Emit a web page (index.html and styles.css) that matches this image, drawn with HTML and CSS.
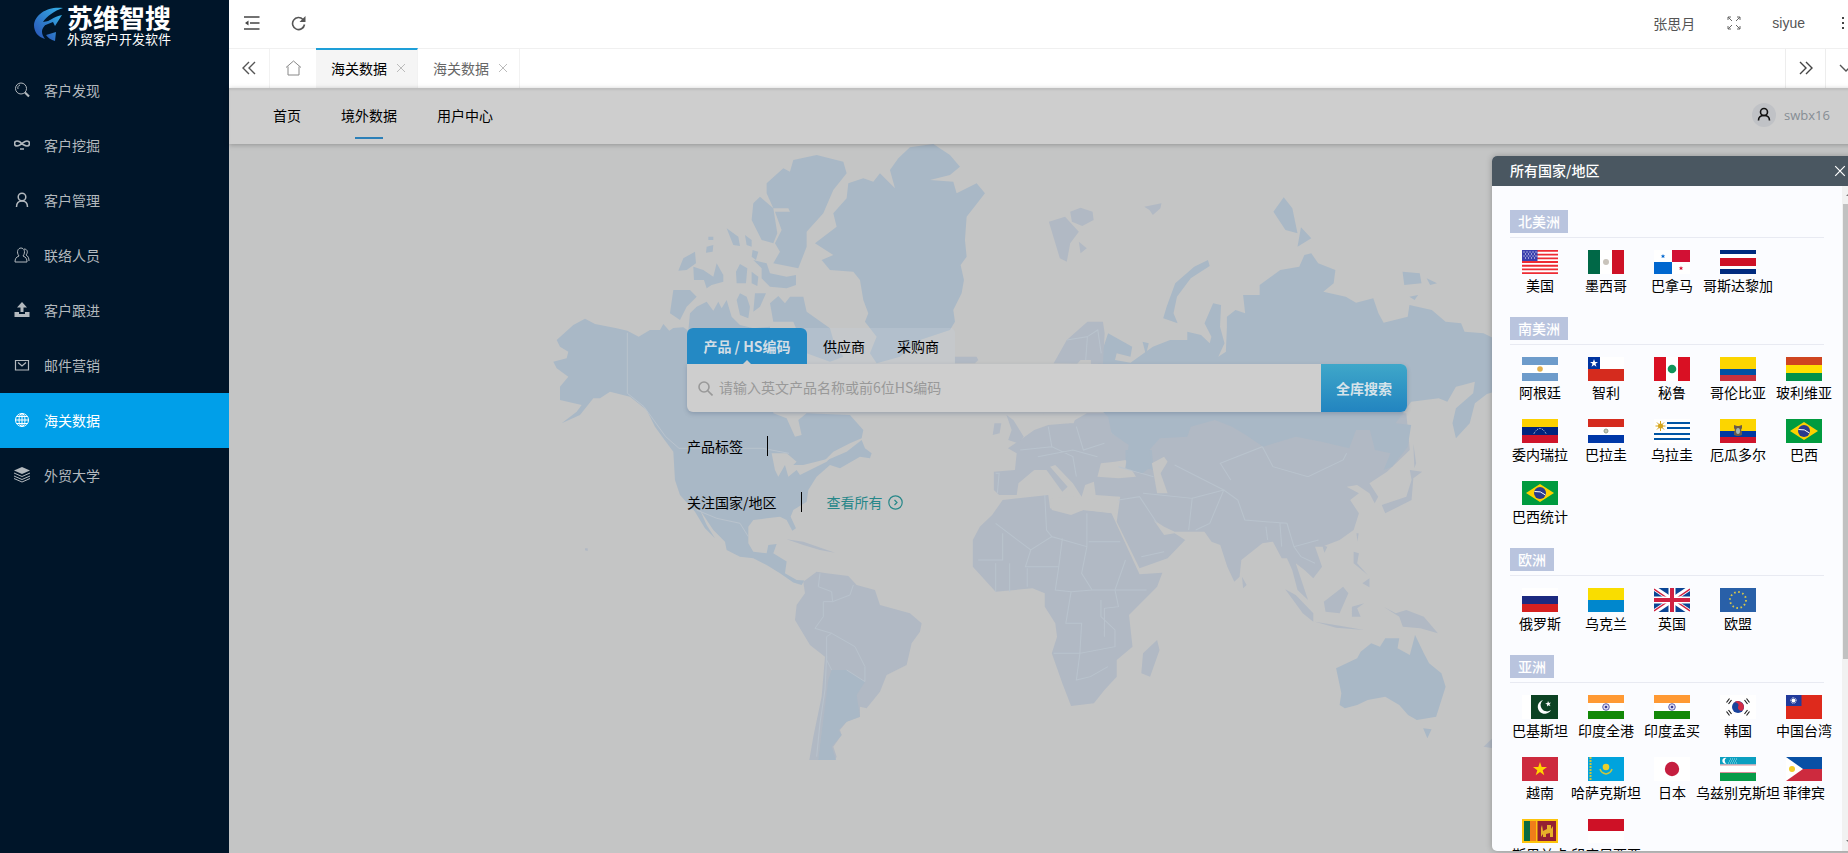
FILE: index.html
```html
<!DOCTYPE html>
<html lang="zh-CN">
<head>
<meta charset="utf-8">
<title>海关数据</title>
<link rel="stylesheet" href="styles.css">
</head>
<body>
<svg class="defs" aria-hidden="true">
  <symbol id="brazil" viewBox="0 0 36 24"><path fill="#009b3f" d="M0 0h36v24H0z"/><path fill="#fed100" d="M18 3 32 12 18 21 4 12z"/><circle cx="18" cy="12" r="6" fill="#2b3a8c"/><path d="M12.500 10.500q6-1 11 3.500" stroke="#fff" fill="none"/></symbol>
  <symbol id="india" viewBox="0 0 36 24"><path fill="#fff" d="M0 0h36v24H0z"/><path fill="#ff9933" d="M0 0h36v8H0z"/><path fill="#138808" d="M0 16h36v8H0z"/><circle cx="18" cy="12" r="3.300" fill="#dfe0f4" stroke="#3a3a95" stroke-width=".8"/><circle cx="18" cy="12" r="1.300" fill="#3a3a95"/></symbol>
  <symbol id="close" viewBox="0 0 10 10"><path d="M1 1l8 8M9 1 1 9" fill="none" stroke="currentColor"/></symbol>
</svg>
<div class="app">
  <aside class="sidebar">
    <a class="logo" href="#">
      <svg width="30" height="36" viewBox="0 0 30 36"><defs><linearGradient id="lg" x1="1" y1="0" x2="0" y2="1"><stop offset="0" stop-color="#35b1e6"/><stop offset="1" stop-color="#2951b5"/></linearGradient></defs><path fill="url(#lg)" d="M29 1C14-1 1 7 0 18c0 7 4 12 11 14-3-4-4-8-2-11 2-4 6-6 11-8L9 15C13 9 20 4 29 1z"/><path fill="url(#lg)" d="M28 8 21 19l-2-4-10 4c4-5 11-9 19-11zM12 28l10-3-1 9c-4-1-7-3-9-6z"/></svg>
      <span class="logo-text"><strong>苏维智搜</strong><small>外贸客户开发软件</small></span>
    </a>
    <nav class="menu">
      <a href="#"><svg viewBox="0 0 16 16"><circle cx="7" cy="6.500" r="5.500"/><path d="M4 7a3 3 0 0 1 2-4"/><path stroke-width="2.200" d="m11 10.500 4 4"/></svg>客户发现</a>
      <a href="#"><svg viewBox="0 0 16 16"><path stroke-width="1.700" d="M8 7C6 4 4 4 3 4a2.500 2.500 0 0 0 0 5c2 0 3-1 5-2.500S11 4 13 4a2.500 2.500 0 0 1 0 5c-2 0-3-1-5-2M6 12h4"/></svg>客户挖掘</a>
      <a href="#"><svg viewBox="0 0 16 16"><circle cx="8" cy="5" r="3.800" stroke-width="1.500"/><path stroke-width="1.500" d="M2.500 15c0-4 2-6 5.500-6s5.500 2 5.500 6"/></svg>客户管理</a>
      <a href="#"><svg viewBox="0 0 16 16"><path d="M5 9C2 5 4 1 7 1s5 4 2 8c3 1 4 3 4 6H1c0-3 1-5 4-6zM10 2c4 0 4 4 2 6 2 1 3 3 3 6"/></svg>联络人员</a>
      <a href="#"><svg viewBox="0 0 16 16"><path class="solid" d="M8 0l5 5.500h-3.500V10h-3V5.500H3zM.500 10H5v2h6v-2h4.500v5H.500z"/></svg>客户跟进</a>
      <a href="#"><svg viewBox="0 0 16 16"><path d="M1.500 3.500h13v9.500h-13zM4 5.500 8 9l4-3.500" stroke-width="1.200"/></svg>邮件营销</a>
      <a href="#" class="active"><svg viewBox="0 0 16 16"><circle cx="8" cy="8" r="6.500"/><ellipse cx="8" cy="8" rx="3" ry="6.500"/><path d="M8 1v14M1.500 8h13M2.500 4.500h11M2.500 11.500h11"/></svg>海关数据</a>
      <a href="#"><svg viewBox="0 0 16 16"><path class="solid" d="m8 0 8 3.500L8 7 0 3.500z"/><path d="m0 6 8 3.500L16 6M0 9l8 3.500L16 9M0 11.500 8 15l8-3.500"/></svg>外贸大学</a>
    </nav>
  </aside>

  <div class="main">
    <header class="topbar">
      <button class="icon-btn" aria-label="折叠菜单"><svg width="16" height="14" viewBox="0 0 16 14"><path d="M0 1h15.500M6 7h9.500M0 13h15.500" stroke="#444" stroke-width="1.600"/><path fill="#444" d="m1 7 3.500-2.500v5z"/></svg></button>
      <button class="icon-btn" aria-label="刷新"><svg width="15" height="15" viewBox="0 0 15 15"><path d="M12 3.500A6 6 0 1 0 13.500 8.500" fill="none" stroke="#555" stroke-width="1.600"/><path fill="#555" d="M14.500 0v6h-6z"/></svg></button>
      <span class="spacer"></span>
      <a href="#">张思月</a>
      <button class="icon-btn full" aria-label="全屏"><svg width="14" height="14" viewBox="0 0 14 14"><path d="M1 4V1h3M1 1l4 4M10 1h3v3M13 1 9 5M1 10v3h3M1 13l4-4M10 13h3v-3M13 13 9 9" fill="none" stroke="#666"/></svg></button>
      <a href="#" class="account">siyue</a>
      <button class="icon-btn more" aria-label="更多"><svg width="4" height="14" viewBox="0 0 4 14"><path d="M1 1h2v2H1zM1 6h2v2H1zM1 11h2v2H1z" fill="#444"/></svg></button>
    </header>
    <div class="tabs">
      <button class="tab-ctl" aria-label="向左"><svg width="14" height="14" viewBox="0 0 14 14"><path d="M7 1 1 7l6 6M13 1 7 7l6 6" fill="none" stroke="#555" stroke-width="1.400"/></svg></button>
      <button class="tab-ctl home" aria-label="主页"><svg width="17" height="16" viewBox="0 0 17 16"><path d="M1 7.500 8.500 1 16 7.500M3 6.500V15h11V6.500" fill="none" stroke="#888"/></svg></button>
      <a class="tab on" href="#">海关数据<svg width="10" height="10"><use href="#close"/></svg></a>
      <a class="tab" href="#">海关数据<svg width="10" height="10"><use href="#close"/></svg></a>
      <span class="spacer"></span>
      <button class="tab-ctl end" aria-label="向右"><svg width="14" height="14" viewBox="0 0 14 14"><path d="m1 1 6 6-6 6M7 1l6 6-6 6" fill="none" stroke="#444" stroke-width="1.400"/></svg></button>
      <button class="tab-ctl end" aria-label="展开"><svg width="14" height="8" viewBox="0 0 14 8"><path d="m1 1 6 6 6-6" fill="none" stroke="#555" stroke-width="1.400"/></svg></button>
    </div>
    <nav class="subnav">
      <a href="#">首页</a><a href="#" class="current">境外数据</a><a href="#">用户中心</a>
      <span class="spacer"></span>
      <a href="#" class="user"><svg width="24" height="24" viewBox="0 0 24 24"><circle cx="12" cy="12" r="12" fill="#c0c2c6"/><circle cx="12" cy="9" r="3.500"/><path d="M6.500 17.500c0-3.500 2-5 5.500-5s5.500 1.500 5.500 5"/></svg>swbx16</a>
    </nav>

    <main class="stage">
      <svg class="map" viewBox="229 144 1636 709" preserveAspectRatio="xMidYMin meet" aria-hidden="true">
        <g transform="translate(540 140) scale(.3333)">
          <path class="b" d="M135 536 165 552 230 565 262 572 296 590 330 570 360 570 370 552 388 572 400 564 430 562 445 572 450 520 470 500 500 485 520 512 535 485 545 505 560 480 575 530 600 555 640 565 690 560 700 700 700 820 740 835 765 890 785 885 775 840 800 820 930 825 970 870 965 895 930 910 880 935 850 965 920 935 965 900 975 925 995 940 990 955 960 950 900 985 870 975 830 1010 805 1050 800 1085 760 1110 752 1130 768 1165 757 1172 740 1140 720 1130 680 1135 640 1140 625 1160 625 1210 640 1235 680 1240 685 1215 710 1212 700 1240 740 1265 735 1300 770 1320 793 1322 785 1335 760 1328 720 1300 680 1275 640 1255 600 1250 560 1230 555 1205 520 1170 480 1110 500 1155 525 1195 495 1165 465 1115 420 1065 405 1020 400 935 370 895 345 860 320 810 270 770 210 755 180 775 160 775 120 825 65 850 110 815 125 795 60 780 60 740 85 710 50 685 40 665 80 655 85 635 60 620 50 600 100 555z"/>
          <path class="b" d="M1110 22 1180 12 1230 45 1260 80 1230 105 1170 120 1240 125 1250 160 1310 130 1335 160 1300 205 1280 230 1275 300 1280 350 1262 375 1272 420 1265 460 1240 510 1245 545 1230 570 1140 600 1080 650 1010 670 990 640 1010 590 975 545 985 520 970 480 960 420 940 395 870 390 845 360 880 345 825 310 890 260 880 220 920 175 925 130 970 115 1000 125 1020 100 1065 145 1050 90 1075 55zM750 95 760 60 830 45 910 65 920 100 880 150 850 220 800 275 800 320 775 385 700 370 720 335 705 310 725 270 705 215 750 215 745 205 700 205 680 160 680 130 730 85zM660 170 700 205 712 280 700 310 665 300 635 240 640 190zM560 265 595 290 600 318 580 315zM505 290h15v10h-15zM500 320 520 315 518 335 498 338zM615 285 635 300 635 320 620 315zM638 330 655 335 648 360 635 350zM465 335 468 370 440 390 415 392 430 355zM460 380 490 390 520 410 530 370 550 405 550 425 515 435 500 445 492 420 462 420zM600 372 622 385 618 430 590 430 588 395zM635 395 655 410 652 438 635 430zM640 360 680 370 690 400 740 410 768 405 768 435 740 445 690 440 665 415 665 385zM400 450 450 450 470 470 440 500 420 540 390 520zM600 460 620 470 630 500 625 535 600 525 590 480zM645 460 678 460 660 500 640 515zM690 490 715 468 735 490 750 470 790 470 800 515 870 565 880 600 910 650 870 665 800 640 760 545 700 545z"/>
          <path class="p" d="M1245 650h65l5 10-10 10h-60z"/>
          <path class="hole" d="M695 940 740 940 770 965 760 975 790 975 870 955 860 965 780 1005 770 990 745 1010 735 975 715 1010 705 990z"/>
          <path class="ln" d="M262 578V760l50 40 65 90 40 35h250l80 15M470 1110l60 25 70 15 25 40"/>
        </g>
        <g transform="translate(540 490) scale(.3333)">
          <path class="p" d="M790 275 830 245 860 250 925 258 950 285 1005 300 1020 345 1110 370 1145 400 1140 425 1115 460 1100 525 1040 555 1020 605 980 655 960 650 960 680 920 695 900 720 905 735 880 770 890 800 885 810 808 810 820 740 845 620 855 500 810 465 765 390 770 345 795 310zM740 148 790 155 885 188 840 180 790 165zM135 175l8 0 0 8-8-2z"/>
          <path class="b" d="M875 540 920 540 975 575 950 615 960 680 920 695 895 720 905 735 875 770 888 810H835L850 690 865 570z"/>
          <path class="ln" d="M840 250 835 290 875 305 878 335 850 335 850 380 825 415 875 430 860 440 860 510 875 540M878 335 930 315 940 285M875 430 945 470 975 530 975 575 920 540M860 500 855 600 840 700 830 800"/>
        </g>
        <g transform="translate(950 450) scale(.351 .3333)">
          <path class="p" d="M125 65 185 60 190 10 165-5 200-30 240-60 280-75 340-80 390-110 470-110 460-50 510-20 700-110 1300-110 1310 0 1290 20 1245 65 1195 100 1220 140 1210 160 1195 130 1160 105 1130 110 1165 130 1140 150 1165 190 1150 240 1110 270 1060 290 1040 290 1060 350 1035 385 1010 360 985 340 1020 450 990 420 975 360 960 325 945 325 920 275 890 280 830 330 825 380 810 395 790 350 770 285 745 275 725 245 640 245 610 230 580 210 610 255 640 250 670 270 620 325 540 355 475 215 485 140 415 135 410 95 385 105 375 140 350 100 300 45 285 50 335 110 320 125 275 60 240 60 195 100 190 135 140 135 125 120z"/>
          <path class="p" d="M150 150 280 135 285 175 340 190 380 180 460 190 540 373 605 368 590 410 510 495 520 590 475 630 475 680 440 720 410 760 345 768 320 700 290 610 305 560 300 520 270 470 270 430 235 415 130 425 65 350 65 270 85 230 120 195zM590 570 597 600 570 680 545 670 550 610zM832 380 845 405 835 415zM955 418 985 435 1035 490 1035 515 1005 490zM1065 455 1120 410 1135 430 1110 490 1070 485zM1040 515 1110 527 1180 540 1100 533zM1150 305 1165 310 1160 340 1190 375 1150 340zM1175 400 1195 385 1195 412zM1145 470 1180 460 1160 475 1170 500 1145 500zM1235 470 1270 490 1300 480 1350 500 1390 550 1340 535 1290 530 1280 500zM1230 165 1300 140 1315 90 1310 60 1345 65 1320 85 1315 150 1240 190zM1320-20l8 60-5 15zM1158 250l6 0-3 25zM1520 890l60-60v70zM1060 285l15 5-8 18z"/>
          <path class="b" d="M1100 655 1160 625 1170 605 1200 580 1225 590 1240 565 1280 565 1275 595 1310 615 1325 555 1350 610 1365 640 1400 670 1412 710 1385 800 1330 810 1305 795 1280 765 1240 740 1190 750 1160 765 1125 775 1110 765 1115 730zM1348 835 1372 838 1360 865zM500 0h75l5 60-80-20z"/>
          <path class="hole" d="M420 80 430 40 470 35 500 30 530 80 480 85zM575 40 610 20 620 35 600 70 620 130 590 130zM350 140 400 150 480 140 475 190 380 180 345 195 290 180 285 145z"/>
          <path class="ln" d="M150 250V330H80M130 220 230 300 290 260 390 290V190M230 300 215 350H310L320 265M395 275H485M390 290 375 370 405 420 470 420 500 330M270 135 275 240 290 260M310 350 300 420 345 425 405 420M220 355V410M130 340V425M170 340V425M345 425 330 520H375L370 610H295M430 450V500L470 540V590L370 610 360 690 400 680 450 650M470 420 480 470 440 475V560M470 420 560 420M545 320 610 305M480 150 540 140 590 220M550 130 690 145 680 240M690 145 780 120 740 220 700 240M780 120 820 150 840 210 960 220 980 290 1050 270M640 45 780 120M800 90 770 40 890-10 920 50 1020 80 1120 30 1130 10M900 230 905 270M940 220 945 290M980 290 1000 320 1040 340M250 20 350 0 420 20M280-70 290-10 350 20 360 80M360-70 380 0 440-20M200 0 290-10M480 50 580 80M130 70 140 70 135 130"/>
        </g>
        <g transform="translate(960 140) scale(.3444 .3333)">
          <path class="b" d="M400 672 430 580 500 620 495 650 455 640 450 660 495 668 560 620 610 600 660 600 660 575 700 585 725 610 730 590 710 550 735 490 758 495 755 560 768 610 750 650 772 635 775 560 775 530 800 510 828 520 822 465 870 465 870 435 930 390 985 380 1000 345 1020 340 1040 370 1090 390 1085 430 1055 455 1120 470 1150 488 1200 475 1215 520 1230 548 1300 530 1305 495 1370 510 1410 545 1455 550 1465 575 1520 580 1560 600 1600 640 1600 740 1530 762 1495 790 1480 850 1440 895 1430 850 1440 805 1490 760 1495 725 1460 735 1440 740 1415 785 1390 775 1310 785 1265 850 1310 855 1300 920 1255 980 1230 990 1250 940 1205 930 1190 870 1150 870 1130 925 1050 905 975 890 880 920 830 885 790 860 740 840 670 860 660 890 580 895 550 930 555 980 530 1000 480 985 490 915 440 880 430 830 400 800z"/>
          <path class="b" d="M940 172 965 205 980 280 945 270 910 215zM990 262 1020 295 980 320zM600 500 625 430 680 380 720 360 725 378 670 415 630 470 620 520 632 550 590 535zM1285 395 1335 400 1340 430 1290 435zM1355 415 1385 430 1365 435zM1305 470l25-5-10 15zM530 605l18 5-8 35z"/>
          <path class="p" d="M258 245 305 230 345 275 320 310 310 365 290 355zM320 215 350 203 385 215 388 240 355 258 325 245zM345 305 368 325 350 340zM535 200 560 195 585 190 582 205 560 225 550 210zM272 670 310 600 370 545 415 545 420 580 415 672zM135 825 155 840 185 890 170 910 140 900 150 870zM100 850 120 850 115 880 95 885z"/>
          <path class="hole" d="M240 820 340 820 330 850 260 848zM350 660h30v12h-40z"/>
          <path class="ln" d="M310 600 370 590 365 660M370 590 400 570 410 640"/>
        </g>
      </svg>

      <form class="search">
        <div class="kinds">
          <button type="button" class="kind picked">产品 / HS编码</button>
          <button type="button" class="kind">供应商</button>
          <button type="button" class="kind">采购商</button>
        </div>
        <div class="bar">
          <svg width="15" height="15" viewBox="0 0 15 15"><circle cx="6" cy="6" r="5"/><path d="m9.500 9.500 5 5"/></svg>
          <input type="text" aria-label="搜索" placeholder="请输入英文产品名称或前6位HS编码">
          <button type="button" class="go">全库搜索</button>
        </div>
        <div class="row"><span>产品标签</span><i></i></div>
        <div class="row"><span>关注国家/地区</span><i></i><a href="#">查看所有<svg width="15" height="15" viewBox="0 0 15 15"><circle cx="7.500" cy="7.500" r="6.700"/><path d="m6.500 5 2.500 2.500L6.500 10"/></svg></a></div>
      </form>

      <section class="panel">
        <header><h2>所有国家/地区</h2><button aria-label="关闭"><svg width="10" height="10"><use href="#close"/></svg></button></header>
        <div class="body">
          <div class="regions">
            <h3>北美洲</h3>
            <div class="flags">
              <a href="#"><svg viewBox="0 0 36 24"><path fill="#fff" d="M0 0h36v24H0z"/><path stroke="#ee2b33" stroke-width="1.850" d="M0 .9h36M0 4.600h36M0 8.300h36M0 12h36M0 15.700h36M0 19.400h36M0 23.100h36"/><path fill="#3b3fae" d="M0 0h15.500v11H0z"/><path stroke="#fff" stroke-dasharray="1 2" d="M1.500 2h13M3 4h11M1.500 6h13M3 8h11"/></svg>美国</a>
              <a href="#"><svg viewBox="0 0 36 24"><path fill="#fff" d="M0 0h36v24H0z"/><path fill="#006847" d="M0 0h12v24H0z"/><path fill="#ce1126" d="M24 0h12v24H24z"/><circle cx="18" cy="12" r="3" fill="#c9c4bb"/></svg>墨西哥</a>
              <a href="#"><svg viewBox="0 0 36 24"><path fill="#fff" d="M0 0h36v24H0z"/><path fill="#d21034" d="M18 0h18v12H18z"/><path fill="#0067cf" d="M0 12h18v12H0z"/><path fill="#0067cf" d="m9 4 .6 1.500h1.600l-1.200 1 .5 1.500L9 7.200 7.500 8 8 6.500l-1.200-1h1.600z"/><path fill="#d21034" d="m27 16 .6 1.500h1.600l-1.200 1 .5 1.500-1.500-.8-1.500.8.500-1.500-1.200-1h1.600z"/></svg>巴拿马</a>
              <a href="#"><svg viewBox="0 0 36 24"><path fill="#fff" d="M0 0h36v24H0z"/><path fill="#002b7f" d="M0 0h36v4H0zM0 19h36v5H0z"/><path fill="#ce1126" d="M0 8h36v8H0z"/></svg>哥斯达黎加</a>
            </div>
            <h3>南美洲</h3>
            <div class="flags">
              <a href="#"><svg viewBox="0 0 36 24"><path fill="#fff" d="M0 0h36v24H0z"/><path fill="#6e9ccb" d="M0 0h36v8H0zM0 16h36v8H0z"/><circle cx="18" cy="12" r="2.800" fill="#e3b04b"/></svg>阿根廷</a>
              <a href="#"><svg viewBox="0 0 36 24"><path fill="#fff" d="M0 0h36v24H0z"/><path fill="#d52b1e" d="M0 12h36v12H0z"/><path fill="#0033a0" d="M0 0h12v12H0z"/><path fill="#fff" d="m6 2 1 3h3L7.500 6.800l1 3L6 8l-2.500 1.800 1-3L2 5h3z"/></svg>智利</a>
              <a href="#"><svg viewBox="0 0 36 24"><path fill="#fff" d="M0 0h36v24H0z"/><path fill="#d91023" d="M0 0h12v24H0zM24 0h12v24H24z"/><circle cx="18" cy="12" r="4.300" fill="#11945a"/></svg>秘鲁</a>
              <a href="#"><svg viewBox="0 0 36 24"><path fill="#fcd500" d="M0 0h36v12H0z"/><path fill="#0052a5" d="M0 12h36v6H0z"/><path fill="#c8313e" d="M0 18h36v6H0z"/></svg>哥伦比亚</a>
              <a href="#"><svg viewBox="0 0 36 24"><path fill="#cf4520" d="M0 0h36v8H0z"/><path fill="#ffe000" d="M0 8h36v8H0z"/><path fill="#00924a" d="M0 16h36v8H0z"/></svg>玻利维亚</a>
              <a href="#"><svg viewBox="0 0 36 24"><path fill="#fcd100" d="M0 0h36v8H0z"/><path fill="#00247d" d="M0 8h36v8H0z"/><path fill="#cf142b" d="M0 16h36v8H0z"/><path fill="none" stroke="#fff" stroke-dasharray="1 1.500" d="M12 14.500q6-10 12 0"/></svg>委内瑞拉</a>
              <a href="#"><svg viewBox="0 0 36 24"><path fill="#fff" d="M0 0h36v24H0z"/><path fill="#d52b1e" d="M0 0h36v8H0z"/><path fill="#0038a8" d="M0 16h36v8H0z"/><circle cx="18" cy="12" r="2" fill="#c5c9b8" stroke="#929c8b"/></svg>巴拉圭</a>
              <a href="#"><svg viewBox="0 0 36 24"><path fill="#fff" d="M0 0h36v24H0z"/><path fill="#0055a5" d="M13 3h23v2H13zM13 8h23v2H13zM0 14h36v2H0zM0 19h36v2H0z"/><path stroke="#d6a51d" d="M6.500 2v10M1.500 7h10M3 3.500l7 7M10 3.500l-7 7"/><circle cx="6.500" cy="7" r="2.500" fill="#d6a51d"/></svg>乌拉圭</a>
              <a href="#"><svg viewBox="0 0 36 24"><path fill="#fcd500" d="M0 0h36v12H0z"/><path fill="#0038a0" d="M0 12h36v6H0z"/><path fill="#cf142b" d="M0 18h36v6H0z"/><path fill="#6b5c48" d="m14 6 3 1h2l3-1v3l-1 2 1 2v3l-3 1h-2l-3-1v-3l1-2-1-2z"/><ellipse cx="18" cy="12" rx="2" ry="3" fill="#a6b7b0"/></svg>厄瓜多尔</a>
              <a href="#"><svg><use href="#brazil"/></svg>巴西</a>
              <a href="#"><svg><use href="#brazil"/></svg>巴西统计</a>
            </div>
            <h3>欧洲</h3>
            <div class="flags">
              <a href="#"><svg viewBox="0 0 36 24"><path fill="#fff" d="M0 0h36v8H0z"/><path fill="#1c2a80" d="M0 8h36v8H0z"/><path fill="#d6201f" d="M0 16h36v8H0z"/></svg>俄罗斯</a>
              <a href="#"><svg viewBox="0 0 36 24"><path fill="#f9dd00" d="M0 0h36v12H0z"/><path fill="#0087cd" d="M0 12h36v12H0z"/></svg>乌克兰</a>
              <a href="#"><svg viewBox="0 0 36 24"><path fill="#0a4595" d="M0 0h36v24H0z"/><path stroke="#fff" stroke-width="5" d="m0 0 36 24M36 0 0 24"/><path stroke="#cf2142" stroke-width="1.500" d="m0 1 16 11M36 1 20 12M0 23l16-11M36 23 20 12"/><path stroke="#fff" stroke-width="7" d="M18 0v24M0 12h36"/><path stroke="#cf2142" stroke-width="4" d="M18 0v24M0 12h36"/></svg>英国</a>
              <a href="#"><svg viewBox="0 0 36 24"><path fill="#2960a8" d="M0 0h36v24H0z"/><circle cx="18" cy="12" r="8" fill="none" stroke="#d9c94a" stroke-width="1.800" stroke-dasharray="1.600 2.588"/></svg>欧盟</a>
            </div>
            <h3>亚洲</h3>
            <div class="flags">
              <a href="#"><svg viewBox="0 0 36 24"><path fill="#fff" d="M0 0h9v24H0z"/><path fill="#0c4223" d="M9 0h27v24H9z"/><path fill="#fff" d="M21 5a7 7 0 1 0 8 10A6 6 0 1 1 21 5zM26 6l1 2 2-.5-1.500 1.700 1 2-2-1-1.500 1.300.2-2-2-1 2.200-.5z"/></svg>巴基斯坦</a>
              <a href="#"><svg><use href="#india"/></svg>印度全港</a>
              <a href="#"><svg><use href="#india"/></svg>印度孟买</a>
              <a href="#"><svg viewBox="0 0 36 24"><path fill="#fff" d="M0 0h36v24H0z"/><circle cx="18" cy="12" r="6" fill="#19439c"/><path fill="#d22a45" d="M13 8.700a6 6 0 0 1 10.500 5.500A3 3 0 0 1 18 12a3 3 0 0 0-5-3.300z"/><path stroke="#222" stroke-width="1.200" d="m6.500 7.500 3-4M8.500 9l3-4M26.500 3.500l3 4M24.500 5l3 4M6.500 16.500l3 4M8.500 15l3 4M26.500 20.500l3-4M24.500 19l3-4"/></svg>韩国</a>
              <a href="#"><svg viewBox="0 0 36 24"><path fill="#de2a1c" d="M0 0h36v24H0z"/><path fill="#213a9b" d="M0 0h15.500v11H0z"/><circle cx="7.500" cy="5.500" r="2" fill="#fff"/><circle cx="7.500" cy="5.500" r="2.800" fill="none" stroke="#fff" stroke-dasharray=".8 .8"/></svg>中国台湾</a>
              <a href="#"><svg viewBox="0 0 36 24"><path fill="#cd2a3e" d="M0 0h36v24H0z"/><path fill="#ffd400" d="m18 5 1.700 5h5.300l-4.300 3.200 1.600 5L18 15l-4.300 3.200 1.600-5L11 10h5.300z"/></svg>越南</a>
              <a href="#"><svg viewBox="0 0 36 24"><path fill="#00a3dd" d="M0 0h36v24H0z"/><path stroke="#c9c53e" stroke-width="2" stroke-dasharray="2 1" d="M2.500 0v24"/><circle cx="18" cy="10" r="3.300" fill="#e8cf2c"/><path fill="none" stroke="#c9c53e" stroke-width="1.500" d="M12 12q1 4 6 5 5-1 6-5"/></svg>哈萨克斯坦</a>
              <a href="#"><svg viewBox="0 0 36 24"><path fill="#fff" d="M0 0h36v24H0z"/><circle cx="18" cy="12" r="7.200" fill="#c51e3f"/></svg>日本</a>
              <a href="#"><svg viewBox="0 0 36 24"><path fill="#fff" d="M0 0h36v24H0z"/><path fill="#0b9fc0" d="M0 0h36v7.500H0z"/><path fill="#d98d98" d="M0 7.500h36v1H0zM0 15h36v1H0z"/><path fill="#079b48" d="M0 16h36v8H0z"/><path fill="#fff" d="M6.500 1a3 3 0 1 0 0 5.500 3 3 0 0 1 0-5.500z"/><path stroke="#9ce0ea" stroke-dasharray="1 1" d="M10 2h7M9 4h8M8 6h9"/></svg>乌兹别克斯坦</a>
              <a href="#"><svg viewBox="0 0 36 24"><path fill="#0850a5" d="M0 0h36v12H0z"/><path fill="#cd2a3e" d="M0 12h36v12H0z"/><path fill="#fff" d="m0 0 17 12L0 24z"/><circle cx="6" cy="12" r="3" fill="#f2cc28"/></svg>菲律宾</a>
              <a href="#"><svg viewBox="0 0 36 24"><path fill="#fdc40c" d="M0 0h36v24H0z"/><path fill="#0c6b42" d="M2 2h6v20H2z"/><path fill="#ef7d1a" d="M8 2h6v20H8z"/><path fill="#932032" d="M15.500 2H34v20H15.500z"/><path fill="#e6b12a" d="M19 18V9l1-3 1 6 4-2V6h4v4l2-3v11h-3v-4l-4 1v3h-3v-3z"/></svg>斯里兰卡</a>
              <a href="#"><svg viewBox="0 0 36 24"><path fill="#fff" d="M0 0h36v24H0z"/><path fill="#ce1126" d="M0 0h36v12H0z"/></svg>印度尼西亚</a>
            </div>
          </div>
          <div class="scroll"><span class="up"></span><span class="thumb"></span><span class="down"></span></div>
        </div>
      </section>
    </main>
  </div>
</div>
</body>
</html>
```
FILE: styles.css
```css
* { box-sizing: border-box; }
body {
  margin: 0;
  overflow: hidden;
  font: 14px/20px "Noto Sans CJK SC", "Liberation Sans", sans-serif;
  color: #000;
}
a { color: inherit; text-decoration: none; }
button { border: 0; padding: 0; background: none; font: inherit; color: inherit; }
svg { flex: none; }
h2, h3 { margin: 0; font-size: 14px; font-weight: 400; }
.defs { position: absolute; width: 0; height: 0; }
.spacer { flex: 1; }

.app { display: flex; height: 100vh; }

/* sidebar */
.sidebar { flex: none; width: 229px; background: #001529; color: #b3b9be; }
.logo { display: flex; align-items: center; gap: 3px; height: 63px; padding: 0 0 14px 34px; color: #fff; }
.logo-text { display: flex; flex-direction: column; }
.logo-text strong { font-size: 26px; line-height: 28px; font-weight: 700; }
.logo-text small { font-size: 13px; line-height: 16px; }
.menu a { display: flex; align-items: center; gap: 14px; height: 55px; padding: 0 0 2px 14px; }
.menu svg { width: 16px; height: 16px; fill: none; stroke: currentColor; }
.menu .solid { fill: currentColor; stroke: none; }
.menu .active { background: #009fe9; color: #fff; }

.main { flex: 1; min-width: 0; margin-right: -17px; display: flex; flex-direction: column; }

.topbar { display: flex; align-items: center; height: 48px; padding: 0 20px 2px 15px; color: #555; }
.icon-btn { display: flex; margin-right: 31px; }
.topbar .full { margin: 0 31px 0 32px; }
.topbar .account { font-family: "Liberation Sans", sans-serif; }
.topbar .more { margin: 0 0 0 36px; }

.tabs { display: flex; height: 40px; border-top: 1px solid #f0f0f0; color: #666; }
.tab-ctl { display: flex; align-items: center; justify-content: center; width: 41px; padding-bottom: 2px; border-right: 1px solid #f2f2f2; }
.tab-ctl.home { width: 46px; border-right: 0; }
.tab-ctl.end { width: 40px; border-right: 0; border-left: 1px solid #ededed; }
.tab { display: flex; align-items: center; gap: 9px; padding: 0 11px 2px 15px; border-right: 1px solid #f2f2f2; }
.tab svg { color: #bbb; }
.tab.on { margin-top: -1px; border-top: 2px solid #1e9fd8; background: #f5f5f5; color: #000; }

.subnav { position: relative; z-index: 1; display: flex; align-items: center; gap: 40px; height: 56px; padding: 0 35px 2px 44px; background: #cecece; box-shadow: 0 1px 5px rgba(0, 0, 0, .25), inset 0 2px 2px rgba(0, 0, 0, .08); }
.subnav .current { position: relative; }
.subnav .current::after { content: ""; position: absolute; left: 14px; right: 14px; bottom: -14px; height: 2px; background: #2c80b8; }
.user { display: flex; align-items: center; gap: 8px; color: #868d94; font-family: "Open Sans", sans-serif; font-size: 13px; }
.user svg path, .user circle + circle { fill: none; stroke: #111; stroke-width: 1.6px; }

/* stage */
.stage { position: relative; flex: 1; min-height: 0; overflow: hidden; background: #c4c5c5; }
.map { position: absolute; inset: 0; width: 100%; }
.map .b { fill: #a9b8c6; }
.map .p { fill: #b1b9c4; }
.map .hole { fill: #c4c5c5; }
.map .ln { fill: none; stroke: #b9c3cd; stroke-width: 3px; }

.search { position: relative; width: 720px; margin: 184px auto 0; }
.kinds { display: flex; width: max-content; background: rgba(200, 208, 220, .3); border-radius: 5px 5px 0 0; }
.kind { height: 36px; padding: 0 16px; }
.picked { position: relative; width: 120px; padding: 0; border-radius: 6px 6px 0 0; background: #2489c4; color: #d2dde5; font-weight: 700; }
.picked::after { content: ""; position: absolute; left: 56px; bottom: 0; border: 4px solid transparent; border-top: 0; border-bottom-color: #cecece; }
.bar { display: flex; align-items: center; height: 48px; padding-left: 11px; gap: 6px; border-radius: 0 6px 6px 6px; background: #cecece; box-shadow: 0 2px 4px rgba(70, 90, 120, .3); }
.bar svg, .row svg { fill: none; stroke: #999; stroke-width: 1.6px; }
.bar input { flex: 1; min-width: 0; height: 40px; border: 0; padding: 0 0 2px; background: none; font: inherit; outline: 0; }
.bar input::placeholder { color: #999; opacity: 1; }
.go { align-self: stretch; width: 86px; border-radius: 0 6px 6px 0; background: linear-gradient(#3fa7c9, #2284c0); color: #d6e3ea; font-weight: 700; }
.row { display: flex; align-items: center; height: 20px; margin-top: 24px; }
.row + .row { margin-top: 36px; }
.row i { width: 1px; height: 20px; margin: 0 25px 0 24px; background: #000; }
.row a { display: flex; align-items: center; gap: 5px; color: #268789; }
.row svg { stroke: #268789; stroke-width: 1.2px; }

/* country panel */
.panel { position: absolute; top: 12px; right: 6px; bottom: 2px; width: 367px; display: flex; flex-direction: column; overflow: hidden; border-radius: 5px; background: #fbfcff; box-shadow: 0 0 6px rgba(0, 0, 0, .25); }
.panel header { flex: none; display: flex; align-items: center; justify-content: space-between; height: 30px; padding: 0 13px 0 18px; background: #4a5761; color: #fff; }
.panel header h2 { font-weight: 500; line-height: 28px; padding-bottom: 2px; }
.panel header svg { display: block; width: 12px; height: 12px; }
.body { flex: 1; min-height: 0; display: flex; }
.regions { flex: 1; min-width: 0; padding: 24px 18px 0; }
.regions h3 { width: max-content; height: 23px; padding: 0 8px; line-height: 23px; background: #b9c4de; color: #fff; font-weight: 500; }
.flags { display: grid; grid-template-columns: repeat(5, 60px); column-gap: 6px; margin: 4px 0 5px; padding-top: 12px; border-top: 1px solid #e8eaf2; }
.flags a { display: flex; flex-direction: column; align-items: center; height: 62px; line-height: 23px; white-space: nowrap; }
.flags svg { width: 36px; height: 24px; }
.scroll { flex: none; display: flex; flex-direction: column; width: 17px; background: #f1f1f1; }
.scroll .up, .scroll .down { width: 17px; height: 17px; }
.scroll .thumb { flex: none; width: 15px; height: 455px; margin: 1px 1px auto; background: #c1c1c1; }
.up::before, .down::before { content: ""; display: block; width: 0; margin: 6px 4px; border: 4px solid transparent; border-top: 0; border-bottom: 4px solid #777; }
.down::before { border-top: 4px solid #777; border-bottom: 0; }
```
